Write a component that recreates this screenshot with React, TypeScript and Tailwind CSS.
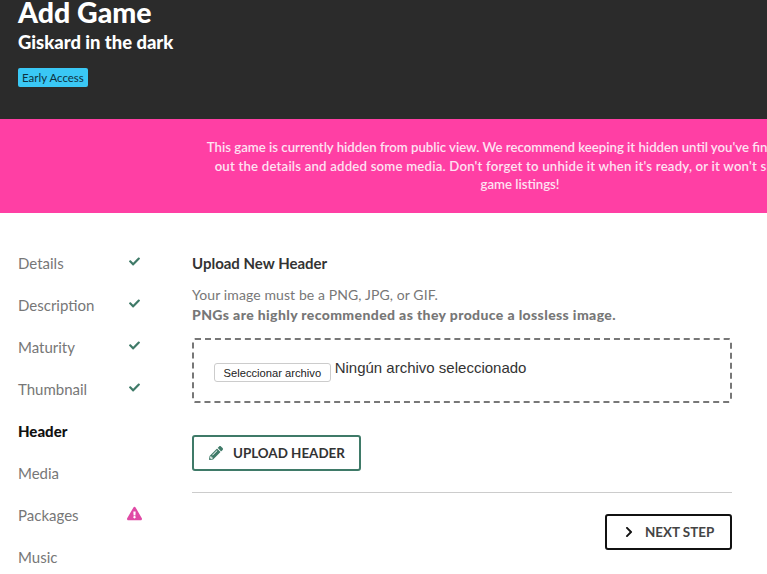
import { FaCheck, FaChevronRight, FaExclamationTriangle, FaPencilAlt } from "react-icons/fa";

const NAV = [
  { label: "Details", status: "done" },
  { label: "Description", status: "done" },
  { label: "Maturity", status: "done" },
  { label: "Thumbnail", status: "done" },
  { label: "Header", status: "active" },
  { label: "Media" },
  { label: "Packages", status: "warn" },
  { label: "Music" },
];

const App = () => {
  return (
    <div className="h-[574px] w-[767px] overflow-hidden bg-white font-['Lato',sans-serif]">
      <div className="w-[1040px]">
        <header className="flex h-[119px] flex-col items-start bg-[#2b2b2b] pl-[18px] text-white">
          <h1 className="-mt-[5px] text-[28.5px] font-black leading-[35px]">Add Game</h1>
          <h2 className="mt-[1px] text-[18.4px] font-black leading-[22px]">Giskard in the dark</h2>
          <span className="mt-[15px] rounded-[2px] bg-[#3ac8f5] px-[4px] text-[11.5px] leading-[19px] text-[#0e3242]">
            Early Access
          </span>
        </header>

        <div className="flex h-[94px] justify-center bg-[#ff3fa4] pt-[19px]">
          <p className="w-[660px] text-center text-[13.2px] font-semibold leading-[18.5px] text-[#fde3f2]">
            This game is currently hidden from public view. We recommend keeping it hidden until you've finished filling
            <br />
            <span className="tracking-[0.2px]">
              out the details and added some media. Don't forget to unhide it when it's ready, or it won't show up in
            </span>
            <br />
            game listings!
          </p>
        </div>

        <div className="flex">
          <nav className="w-[192px] shrink-0 pl-[18px] pt-[29px]">
            <ul className="flex flex-col">
              {NAV.map((item) => (
                <li key={item.label} className="flex h-[42px] w-[124px] items-center justify-between">
                  <span
                    className={
                      item.status === "active"
                        ? "text-[15px] font-black text-[#111111]"
                        : "text-[15px] text-[#777777]"
                    }
                  >
                    {item.label}
                  </span>
                  {item.status === "done" && <FaCheck size={11} className="mr-[2px] -mt-[3px] text-[#3f7a68]" />}
                  {item.status === "warn" && (
                    <FaExclamationTriangle size={15} className="-mt-[3px] text-[#e04aa5]" />
                  )}
                </li>
              ))}
            </ul>
          </nav>

          <main className="w-[540px] pt-[40px]">
            <h3 className="text-[15px] font-bold leading-[20px] text-[#333333]">Upload New Header</h3>
            <p className="mt-[13px] text-[14px] leading-[18px] tracking-[0.1px] text-[#777777]">
              Your image must be a PNG, JPG, or GIF.
            </p>
            <p className="text-[14px] font-black leading-[21px] tracking-[0.38px] text-[#777777]">
              PNGs are highly recommended as they produce a lossless image.
            </p>

            <div className="mt-[13px] flex h-[65px] items-center rounded-[3px] border-2 border-dashed border-[#777777] pl-[20px]">
              <button className="-mb-[4px] h-[19px] rounded-[3px] border border-[#cccccc] bg-white px-[8.5px] font-['Liberation_Sans',sans-serif] text-[11.2px] leading-[16px] text-[#222222]">
                Seleccionar archivo
              </button>
              <span className="-mt-[5px] ml-[4px] font-['Liberation_Sans',sans-serif] text-[15px] leading-[16px] text-[#333333]">
                Ningún archivo seleccionado
              </span>
            </div>

            <button className="mt-[32px] flex h-[36px] w-[169px] items-center rounded-[3px] border-2 border-[#3f7a68] pl-[15px] text-[13.4px] font-bold text-[#333333]">
              <FaPencilAlt size={14} className="text-[#3f7a68]" />
              <span className="ml-[10px]">UPLOAD HEADER</span>
            </button>

            <hr className="mt-[21px] border-[#cccccc]" />

            <div className="mt-[21px] flex justify-end">
              <button className="flex h-[36px] w-[127px] items-center rounded-[3px] border-2 border-[#111111] pl-[16px] text-[13.4px] font-bold text-[#444444]">
                <FaChevronRight size={12} className="text-[#111111]" />
                <span className="ml-[10px]">NEXT STEP</span>
              </button>
            </div>
          </main>
        </div>
      </div>
    </div>
  );
};

export default App;
